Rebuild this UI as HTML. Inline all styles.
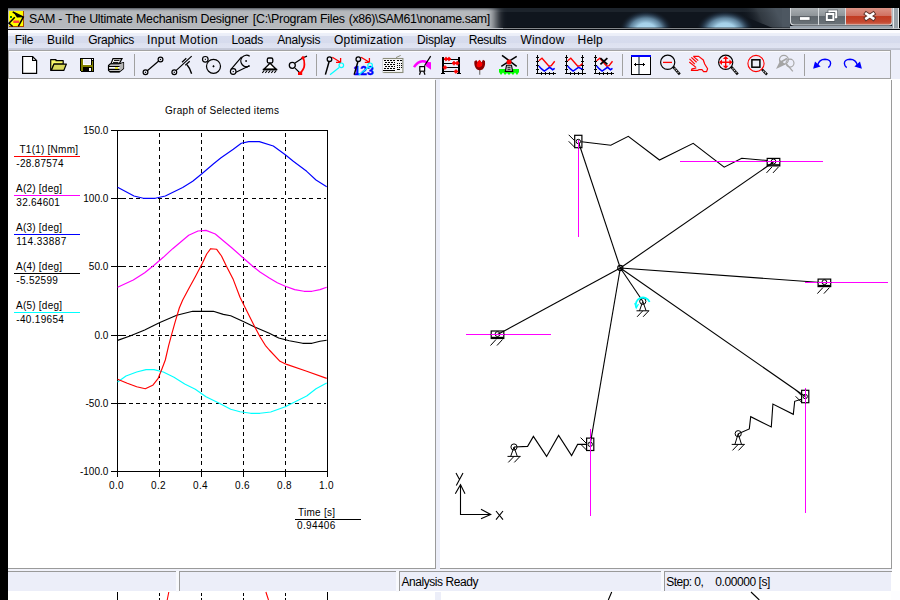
<!DOCTYPE html>
<html><head><meta charset="utf-8">
<style>
html,body{margin:0;padding:0;}
body{width:900px;height:600px;background:#000;position:relative;overflow:hidden;font-family:"Liberation Sans",sans-serif;}
.abs{position:absolute;}
#title{left:8px;top:8px;width:892px;height:22px;background:#0b0d12;}
#ttext{left:29px;top:11px;font-size:13.5px;color:#000;white-space:nowrap;line-height:16px;}
#menu{left:8px;top:30px;width:892px;height:20px;background:linear-gradient(#fdfdff 0px,#fdfdff 2.5px,#edf0f9 3.5px,#ebeef8 5.5px,#d8ddee 6.5px,#d6dbed 12.5px,#dde1f0 13.5px,#dfe3f2 17.7px,#c8ccdb 18.5px,#c4c8d8 20px);}
.mi{position:absolute;top:33px;font-size:12px;letter-spacing:-0.4px;line-height:14px;color:#000;white-space:nowrap;}
#tbar{left:8px;top:50px;width:892px;height:29px;background:#eceef9;}
#tbarbox{left:8px;top:50px;width:882px;height:28px;border:1px solid #a0a0a0;border-top-color:#a9a9a9;box-sizing:content-box;}
#client{left:8px;top:79px;width:892px;height:521px;background:#fff;}
#split{left:435px;top:79px;width:5px;height:493px;background:#eceef9;}
#status{left:8px;top:572px;width:883px;height:19px;background:#eceef9;}
.st{position:absolute;top:575px;font-size:12px;letter-spacing:-0.4px;line-height:14px;color:#000;white-space:nowrap;}
svg{position:absolute;left:0;top:0;}
.gl{font-size:10px;fill:#000;font-family:"Liberation Sans",sans-serif;}
</style></head><body>
<div id="title" class="abs"></div>
<div id="menu" class="abs"></div>
<div id="tbar" class="abs"></div>
<div id="client" class="abs"></div>
<div id="split" class="abs"></div>
<div id="status" class="abs"></div>
<svg id="main" width="900" height="600" viewBox="0 0 900 600">
<defs>
<linearGradient id="tglow" x1="0" x2="1" y1="0" y2="0">
<stop offset="0" stop-color="#aeb1b5"/><stop offset="0.55" stop-color="#b4b7bb"/><stop offset="0.93" stop-color="#a2a5aa"/><stop offset="0.965" stop-color="#5a5e66"/><stop offset="1" stop-color="#10161e" stop-opacity="0"/>
</linearGradient>
<linearGradient id="tv" x1="0" x2="0" y1="0" y2="1">
<stop offset="0" stop-color="#30363c" stop-opacity="0.55"/><stop offset="0.15" stop-color="#40464c" stop-opacity="0.25"/><stop offset="0.35" stop-color="#fff" stop-opacity="0.05"/><stop offset="0.8" stop-color="#fff" stop-opacity="0.0"/><stop offset="1" stop-color="#30363c" stop-opacity="0.2"/>
</linearGradient>
<radialGradient id="blob" cx="0.5" cy="0.5" r="0.5">
<stop offset="0" stop-color="#b4dcf2"/><stop offset="0.35" stop-color="#a4d0e8"/><stop offset="0.6" stop-color="#6c94b0" stop-opacity="0.85"/><stop offset="0.8" stop-color="#2c4258" stop-opacity="0.6"/><stop offset="1" stop-color="#10161e" stop-opacity="0"/>
</radialGradient>
<linearGradient id="btn" x1="0" x2="0" y1="0" y2="1">
<stop offset="0" stop-color="#a9aeb2"/><stop offset="0.48" stop-color="#8e9498"/><stop offset="0.5" stop-color="#5f666c"/><stop offset="1" stop-color="#6a7278"/>
</linearGradient>
<linearGradient id="btnc" x1="0" x2="0" y1="0" y2="1">
<stop offset="0" stop-color="#dc9486"/><stop offset="0.48" stop-color="#d07060"/><stop offset="0.5" stop-color="#c23c22"/><stop offset="0.85" stop-color="#c44830"/><stop offset="1" stop-color="#d0705c"/>
</linearGradient>
<linearGradient id="rstripe" x1="0" x2="1" y1="0" y2="0">
<stop offset="0" stop-color="#10161e" stop-opacity="0"/><stop offset="0.6" stop-color="#4a525a"/><stop offset="1" stop-color="#5a646c"/>
</linearGradient>
<linearGradient id="diag" gradientUnits="userSpaceOnUse" x1="745" y1="22" x2="775" y2="8">
<stop offset="0" stop-color="#10161e" stop-opacity="0"/><stop offset="0.5" stop-color="#3a424a" stop-opacity="0.8"/><stop offset="1" stop-color="#4a545e"/>
</linearGradient>
<filter id="gb" x="-5%" y="-100%" width="110%" height="300%"><feGaussianBlur stdDeviation="5 1.6"/></filter>
<clipPath id="tclip"><rect x="8" y="8" width="892" height="21"/></clipPath>
</defs>
<rect x="8" y="8" width="892" height="21" fill="#10161e"/>
<rect x="8" y="8" width="892" height="4" fill="#202830" opacity="0.8"/>
<g clip-path="url(#tclip)">
<rect x="-20" y="8.6" width="516" height="28" fill="#b6b9bd" filter="url(#gb)"/>
<ellipse cx="646" cy="30" rx="27" ry="20" fill="url(#blob)"/>
<ellipse cx="725" cy="30" rx="29" ry="20" fill="url(#blob)"/>
<path d="M725,8 L790,8 L790,29 L775,29 Z" fill="url(#diag)"/>
<rect x="782" y="8" width="8" height="21" fill="#4e5862" opacity="0.8"/>
<rect x="892" y="8" width="8" height="21" fill="#98a2aa"/>
<rect x="893" y="8" width="1" height="21" fill="#e8ecee"/>
<rect x="898" y="8" width="1" height="21" fill="#e8ecee"/>
<rect x="899" y="8" width="1" height="22" fill="#000"/>
</g>
<rect x="8" y="28" width="892" height="1" fill="#c4c8cc" opacity="0.9"/>
<rect x="503" y="28" width="287" height="1" fill="#85898d"/>
<rect x="8" y="29" width="892" height="1" fill="#0c1016"/>
<rect x="503" y="27" width="287" height="1" fill="#000" opacity="0.3"/>
<path d="M790,8 H892.5 V22 Q892.5,25.5 889,25.5 H794 Q790,25.5 790,22 Z" fill="#d6dadd"/>
<path d="M791,8 H818 V24.5 H794.5 Q791,24.5 791,21.5 Z" fill="url(#btn)"/>
<rect x="819" y="8" width="26" height="16.5" fill="url(#btn)"/>
<path d="M846,8 H891.5 V21.5 Q891.5,24.5 888.5,24.5 H846 Z" fill="url(#btnc)"/>
<rect x="790" y="26" width="102" height="2" fill="#aab4be" opacity="0.9"/>
<rect x="799.5" y="16.7" width="10.5" height="3.6" fill="#fff" stroke="#4a5056" stroke-width="0.8"/>
<rect x="829.3" y="11.3" width="7" height="6" fill="none" stroke="#4a5056" stroke-width="3.2"/><rect x="829.3" y="11.3" width="7" height="6" fill="none" stroke="#fff" stroke-width="2"/>
<rect x="826.8" y="14" width="6.6" height="6" fill="#70787e" stroke="#4a5056" stroke-width="3.2"/><rect x="826.8" y="14" width="6.6" height="6" fill="#5a6268" stroke="#fff" stroke-width="2"/>
<path d="M866.3,13.7 L873.2,18.4 M873.2,13.7 L866.3,18.4" stroke="#5a3028" stroke-width="4.4" stroke-linecap="square"/>
<path d="M866.3,13.7 L873.2,18.4 M873.2,13.7 L866.3,18.4" stroke="#fff" stroke-width="2.6" stroke-linecap="square"/>
<g shape-rendering="crispEdges"><rect x="9" y="11" width="15" height="16" fill="#a84800"/><rect x="9" y="11" width="14" height="15" fill="#ffff00"/><rect x="10" y="16" width="2" height="2" fill="#008000"/></g>
<path d="M12.7,12 L23.3,17 L18.3,26.3 M14.8,17.2 L9,23.3 L12.7,26.5" stroke="#000" stroke-width="1.5" fill="none"/>
<path d="M13.4,12.3 L17,17.5 L22.8,17.2 Z" fill="#000"/>
<rect x="13.3" y="20.5" width="6" height="2.5" fill="#ff4040"/>
<text x="29.0" y="22.8" font-family="Liberation Sans, sans-serif" font-size="12.4" fill="#000" textLength="219.5" lengthAdjust="spacing">SAM - The Ultimate Mechanism Designer</text>
<text x="252.8" y="22.8" font-family="Liberation Sans, sans-serif" font-size="12.4" fill="#000" textLength="92.2" lengthAdjust="spacing">[C:\Program Files</text>
<text x="348.8" y="22.8" font-family="Liberation Sans, sans-serif" font-size="12.4" fill="#000" textLength="141.4" lengthAdjust="spacing">(x86)\SAM61\noname.sam]</text>
<g shape-rendering="crispEdges">
<rect x="8.5" y="50.5" width="882" height="28" fill="none" stroke="#a3a3a3"/>
<rect x="9" y="51" width="881" height="1" fill="#fbfbfe"/>
<rect x="134" y="54" width="1" height="22" fill="#a0a0a0"/>
<rect x="316" y="54" width="1" height="22" fill="#a0a0a0"/>
<rect x="527" y="54" width="1" height="22" fill="#a0a0a0"/>
<rect x="622" y="54" width="1" height="22" fill="#a0a0a0"/>
<rect x="804" y="54" width="1" height="22" fill="#a0a0a0"/>
<rect x="435" y="80" width="1" height="489" fill="#9a9a9a"/>
<rect x="8" y="568" width="428" height="1" fill="#9a9a9a"/>
<rect x="891" y="80" width="1" height="489" fill="#9a9a9a"/>
<rect x="440" y="568" width="452" height="1" fill="#9a9a9a"/>
<rect x="8" y="569" width="884" height="2" fill="#f1f2fa"/>
<rect x="8" y="571" width="884" height="1" fill="#9a9a9a"/>
<rect x="176" y="571" width="3" height="21" fill="#f8f9fd"/>
<rect x="179" y="572" width="1" height="19" fill="#9a9a9a"/>
<rect x="396" y="571" width="3" height="21" fill="#f8f9fd"/>
<rect x="399" y="572" width="1" height="19" fill="#9a9a9a"/>
<rect x="661" y="571" width="3" height="21" fill="#f8f9fd"/>
<rect x="664" y="572" width="1" height="19" fill="#9a9a9a"/>
<rect x="435" y="592" width="6" height="8" fill="#eceef9"/>
<rect x="891" y="591" width="9" height="9" fill="#fdfdff"/>
<path d="M117.5,592 V600 M327.5,592 V600" stroke="#000" stroke-width="1"/>
<path d="M159.5,593 V595.7 M159.5,597.8 V600" stroke="#000" stroke-width="1"/>
<path d="M201.5,593 V595.7 M201.5,597.8 V600" stroke="#000" stroke-width="1"/>
<path d="M243.5,593 V595.7 M243.5,597.8 V600" stroke="#000" stroke-width="1"/>
<path d="M285.5,593 V595.7 M285.5,597.8 V600" stroke="#000" stroke-width="1"/>
</g>
<path d="M168.8,592 L167.2,600 M265.9,592 L268.5,600" stroke="#ff0000" stroke-width="1.1"/>
<path d="M611.7,592 L608.3,600 M751,592 L759.3,600" stroke="#000" stroke-width="1.1"/>
<g shape-rendering="crispEdges" stroke="#000" stroke-width="1" fill="none">
<path d="M117.5,130.5 H327.5 V471.5 H117.5 Z"/>
<path d="M111,130.5 H117.5"/>
<path d="M111,198.5 H117.5"/>
<path d="M111,266.5 H117.5"/>
<path d="M111,335.5 H117.5"/>
<path d="M111,403.5 H117.5"/>
<path d="M111,471.5 H117.5"/>
<path d="M117.5,471.5 V477"/>
<path d="M159.5,471.5 V477"/>
<path d="M201.5,471.5 V477"/>
<path d="M243.5,471.5 V477"/>
<path d="M285.5,471.5 V477"/>
<path d="M327.5,471.5 V477"/>
<path d="M159.5,132.8 V471.5" stroke-dasharray="4 3.3"/>
<path d="M201.5,132.8 V471.5" stroke-dasharray="4 3.3"/>
<path d="M243.5,132.8 V471.5" stroke-dasharray="4 3.3"/>
<path d="M285.5,132.8 V471.5" stroke-dasharray="4 3.3"/>
<path d="M117.5,198.5 H125.5"/>
<path d="M128.9,198.5 H325.5" stroke-dasharray="3.9 3.32"/>
<path d="M117.5,266.5 H125.5"/>
<path d="M128.9,266.5 H325.5" stroke-dasharray="3.9 3.32"/>
<path d="M117.5,335.5 H125.5"/>
<path d="M128.9,335.5 H325.5" stroke-dasharray="3.9 3.32"/>
<path d="M117.5,403.5 H125.5"/>
<path d="M128.9,403.5 H325.5" stroke-dasharray="3.9 3.32"/>
</g>
<path d="M117.6,187.3 L134.0,196.0 L143.3,198.3 L155.3,198.3 L165.3,196.0 L182.7,187.6 L192.7,181.3 L201.6,174.0 L213.3,164.0 L220.7,158.0 L233.3,149.3 L241.3,143.3 L248.7,141.6 L259.3,141.6 L273.3,146.0 L285.3,154.7 L293.3,161.3 L306.7,171.3 L316.0,180.0 L326.7,186.7" stroke="#0000ff" stroke-width="1.15" fill="none" stroke-linejoin="round"/>
<path d="M117.6,287.3 L133.3,280.0 L144.7,272.7 L154.0,265.3 L163.3,257.3 L172.7,248.7 L180.7,242.0 L188.7,235.3 L198.0,231.0 L206.0,230.4 L215.3,234.0 L223.3,240.7 L232.0,248.0 L243.3,258.0 L253.3,266.7 L260.0,272.0 L269.3,278.0 L277.3,282.7 L285.3,286.2 L294.7,289.6 L304.0,291.3 L312.0,291.3 L320.0,289.6 L326.7,287.3" stroke="#ff00ff" stroke-width="1.15" fill="none" stroke-linejoin="round"/>
<path d="M117.6,340.4 L130.0,336.0 L144.7,330.0 L159.3,322.7 L176.7,315.3 L192.7,311.3 L213.3,311.3 L223.3,314.4 L230.7,315.7 L243.3,321.6 L254.7,327.0 L269.3,333.3 L278.7,338.0 L289.3,340.7 L302.7,343.3 L312.0,343.3 L320.0,341.3 L326.7,340.3" stroke="#000" stroke-width="1.15" fill="none" stroke-linejoin="round"/>
<path d="M117.6,382.0 L126.0,376.0 L136.7,372.0 L146.0,369.6 L154.0,369.6 L163.3,372.0 L174.0,377.3 L184.7,384.0 L195.3,389.3 L206.0,396.7 L219.3,403.3 L230.7,409.3 L240.0,411.7 L250.7,413.3 L260.0,413.3 L270.7,412.0 L285.3,406.7 L294.7,402.0 L306.7,396.0 L316.0,388.7 L326.7,383.0" stroke="#00ffff" stroke-width="1.15" fill="none" stroke-linejoin="round"/>
<path d="M117.6,379.3 L127.3,383.3 L136.7,386.7 L145.3,388.7 L152.7,385.3 L158.0,378.7 L162.0,368.7 L165.3,360.0 L168.7,345.3 L171.6,334.7 L175.3,321.3 L179.3,308.0 L182.7,300.0 L188.7,288.7 L195.3,276.7 L202.0,264.0 L206.7,254.0 L210.7,248.7 L216.7,249.3 L221.5,256.0 L226.7,266.7 L233.3,279.6 L240.0,297.3 L246.7,310.7 L254.7,326.7 L260.0,336.7 L265.3,345.3 L269.3,350.0 L280.0,361.3 L286.7,364.4 L306.7,371.3 L326.7,378.4" stroke="#ff0000" stroke-width="1.15" fill="none" stroke-linejoin="round"/>
<text class="gl" x="108.3" y="133.7" text-anchor="end">150.0</text>
<text class="gl" x="108.3" y="201.7" text-anchor="end">100.0</text>
<text class="gl" x="108.3" y="269.7" text-anchor="end">50.0</text>
<text class="gl" x="108.3" y="338.7" text-anchor="end">0.0</text>
<text class="gl" x="108.3" y="406.7" text-anchor="end">-50.0</text>
<text class="gl" x="108.3" y="474.7" text-anchor="end">-100.0</text>
<text class="gl" x="116.5" y="489" text-anchor="middle" letter-spacing="0.3">0.0</text>
<text class="gl" x="158.5" y="489" text-anchor="middle" letter-spacing="0.3">0.2</text>
<text class="gl" x="200.5" y="489" text-anchor="middle" letter-spacing="0.3">0.4</text>
<text class="gl" x="242.5" y="489" text-anchor="middle" letter-spacing="0.3">0.6</text>
<text class="gl" x="284.5" y="489" text-anchor="middle" letter-spacing="0.3">0.8</text>
<text class="gl" x="326.5" y="489" text-anchor="middle" letter-spacing="0.3">1.0</text>
<text class="gl" x="165" y="113.8" textLength="114" lengthAdjust="spacing">Graph of Selected items</text>
<text class="gl" x="19.5" y="153.2" textLength="58.5" lengthAdjust="spacing">T1(1) [Nmm]</text>
<path d="M14,156.5 H80" stroke="#ff0000" stroke-width="1" shape-rendering="crispEdges"/>
<text class="gl" x="16.3" y="167.1" textLength="47.2" lengthAdjust="spacing">-28.87574</text>
<text class="gl" x="16" y="192.2" textLength="46" lengthAdjust="spacing">A(2) [deg]</text>
<path d="M14,195.5 H80" stroke="#ff00ff" stroke-width="1" shape-rendering="crispEdges"/>
<text class="gl" x="16.3" y="206.1" textLength="43.6" lengthAdjust="spacing">32.64601</text>
<text class="gl" x="16" y="231.2" textLength="46" lengthAdjust="spacing">A(3) [deg]</text>
<path d="M14,234.5 H80" stroke="#0000ff" stroke-width="1" shape-rendering="crispEdges"/>
<text class="gl" x="16.3" y="245.1" textLength="50" lengthAdjust="spacing">114.33887</text>
<text class="gl" x="16" y="270.2" textLength="46" lengthAdjust="spacing">A(4) [deg]</text>
<path d="M14,273.5 H80" stroke="#000" stroke-width="1" shape-rendering="crispEdges"/>
<text class="gl" x="16.3" y="284.1" textLength="41.6" lengthAdjust="spacing">-5.52599</text>
<text class="gl" x="16" y="309.2" textLength="46" lengthAdjust="spacing">A(5) [deg]</text>
<path d="M14,312.5 H80" stroke="#00ffff" stroke-width="1" shape-rendering="crispEdges"/>
<text class="gl" x="16.3" y="323.1" textLength="47.6" lengthAdjust="spacing">-40.19654</text>
<text class="gl" x="298" y="515.9" textLength="37" lengthAdjust="spacing">Time [s]</text>
<path d="M295,519.5 H361" stroke="#000" stroke-width="1" shape-rendering="crispEdges"/>
<text class="gl" x="297" y="528.8" textLength="38.3" lengthAdjust="spacing">0.94406</text>
<g stroke="#000" stroke-width="1.1" fill="none" stroke-linecap="butt">
<path d="M620.3,268 L578.3,141.5"/>
<path d="M620.3,268 L773.5,162"/>
<path d="M620.3,268 L824.4,282.7"/>
<path d="M620.3,268 L805.2,396.5"/>
<path d="M620.3,268 L590.2,444.3"/>
<path d="M620.3,268 L497.5,334.6"/>
<path d="M620.3,268 L642.8,301.3"/>
<circle cx="620.3" cy="268" r="2.6" />
<path d="M581.5,141.7 L610.8,145.3 L628.3,136.3 L659.5,160.0 L693.2,143.3 L724.2,167.2 L741.7,158.3 L767.5,160.5"/>
<path d="M801.3,399.3 L794.7,401.3 L793.3,414.3 L772.9,404.0 L771.3,426.9 L750.7,416.7 L749.3,428.9 L738.3,433.7"/>
<path d="M586.4,444.4 L577.6,444.4 L571.6,455.6 L558.6,435.4 L546.6,456.4 L533.4,436.4 L527.6,446.4 L514.0,447.0"/>
</g>
<g stroke="#ff00ff" stroke-width="1" shape-rendering="crispEdges">
<path d="M578.5,140 V237"/>
<path d="M680,161.5 H823"/>
<path d="M805,282.5 H888"/>
<path d="M805.5,388 V513"/>
<path d="M590.5,429 V516"/>
<path d="M466,334.5 H551"/>
</g>
<g stroke="#000" stroke-width="1.2" fill="none">
<rect x="574.7" y="135.3" width="7.2" height="12.4"/><circle cx="578.3" cy="141.5" r="2.2" stroke-width="1"/><path d="M568.7,134.8 L574.7,140.8 M568.7,141.3 L574.7,147.3" stroke-width="1"/>
<rect x="801.6" y="390.3" width="7.2" height="12.4"/><circle cx="805.2" cy="396.5" r="2.2" stroke-width="1"/><path d="M795.6,389.8 L801.6,395.8 M795.6,396.3 L801.6,402.3" stroke-width="1"/>
<rect x="586.6" y="438.1" width="7.2" height="12.4"/><circle cx="590.2" cy="444.3" r="2.2" stroke-width="1"/><path d="M580.6,437.6 L586.6,443.6 M580.6,444.1 L586.6,450.1" stroke-width="1"/>
<rect x="767.2" y="158.4" width="12.6" height="7.5"/><path d="M767.2,164.9 H779.8" stroke-width="1.4"/><circle cx="773.5" cy="161.5" r="2.4" stroke-width="1"/><path d="M772.0,166.9 L766.5,172.9 M778.5,166.9 L773.0,172.9" stroke-width="1"/>
<rect x="818.1" y="279.1" width="12.6" height="7.5"/><path d="M818.1,285.6 H830.7" stroke-width="1.4"/><circle cx="824.4" cy="282.2" r="2.4" stroke-width="1"/><path d="M822.9,287.6 L817.4,293.6 M829.4,287.6 L823.9,293.6" stroke-width="1"/>
<rect x="491.2" y="331.0" width="12.6" height="7.5"/><path d="M491.2,337.5 H503.8" stroke-width="1.4"/><circle cx="497.5" cy="334.1" r="2.4" stroke-width="1"/><path d="M496.0,339.5 L490.5,345.5 M502.5,339.5 L497.0,345.5" stroke-width="1"/>
</g>
<g stroke="#ff00ff" stroke-width="1" shape-rendering="crispEdges">
<path d="M578.5,141 V148"/><path d="M805.5,390 V403"/><path d="M590.5,438 V451"/>
<path d="M767,161.5 H780"/><path d="M818,282.5 H831"/><path d="M491,334.5 H504"/>
</g>
<g stroke="#000" stroke-width="1" fill="none"><circle cx="738.2" cy="433.7" r="3.1"/><path d="M738.2,433.7 L734.9,444.4 M738.2,433.7 L741.5,444.4"/><path d="M731.7,444.4 H744.7"/><path d="M738.2,444.4 L732.5,450.4 M744.2,444.4 L738.5,450.4"/></g>
<g stroke="#000" stroke-width="1" fill="none"><circle cx="514" cy="447" r="3.1"/><path d="M514,447 L510.7,456.4 M514,447 L517.3,456.4"/><path d="M507.5,456.4 H520.5"/><path d="M514.0,456.4 L508.3,462.4 M520.0,456.4 L514.3,462.4"/></g>
<g stroke="#000" stroke-width="1" fill="none"><circle cx="642.8" cy="301.3" r="3.1"/><path d="M642.8,301.3 L639.5,310.8 M642.8,301.3 L646.1,310.8"/><path d="M636.5,310.8 H649.1"/><path d="M642.8,310.8 L637.1,316.8 M648.8,310.8 L643.1,316.8"/></g>
<path d="M636.3,307.5 A7,7 0 1 1 649.6,302" stroke="#00ffff" stroke-width="1.8" fill="none"/>
<path d="M634.8,303 L636.3,308 L638.5,304" stroke="#00ffff" stroke-width="1.2" fill="none"/>
<g stroke="#000" stroke-width="1.1" fill="none">
<path d="M460.5,484.7 V514.5 H490.7"/>
<path d="M455.3,493.7 L460.5,484.7 L465,493.7"/>
<path d="M481,509.3 L490.7,514.4 L481,518.7"/>
<path d="M456,473 L459.5,479.5 M463,473 L456.3,485.5"/>
<path d="M496,511 L503,519.7 M503,511 L496,519.7"/>
</g>
<path d="M22.6,56.5 H32.6 L36.6,60.5 V73.4 H22.6 Z" fill="#fff" stroke="#000" stroke-width="1.2"/>
<path d="M32.6,56.5 V60.5 H36.6" fill="none" stroke="#000" stroke-width="1.2"/>
<path d="M50.7,59.6 H56 V60.7 H63.2 V64 H54 L51.5,70.3 H50.7 Z" fill="#fafa6a" stroke="#000" stroke-width="1.2" stroke-linejoin="round"/>
<path d="M54,64.1 H66.4 L63.8,70.4 H51.3 Z" fill="#d9d95c" stroke="#000" stroke-width="1.2" stroke-linejoin="round"/>
<g shape-rendering="crispEdges">
<rect x="80" y="58" width="14" height="14" fill="#000"/>
<rect x="81" y="59" width="2" height="12" fill="#808000"/>
<rect x="92" y="61" width="1" height="10" fill="#808000"/>
<rect x="81" y="65" width="12" height="2" fill="#808000"/>
<rect x="83" y="59" width="8" height="6" fill="#fff"/>
<rect x="84" y="60" width="6" height="4" fill="#eceef9"/>
<rect x="89" y="68" width="2" height="3" fill="#fff"/>
<rect x="92" y="59" width="1" height="1" fill="#fff"/>
<rect x="80" y="71" width="1" height="1" fill="#eceef9"/>
</g>
<path d="M113,58.6 H122 L119.2,63.8 H111 Z" fill="#fff" stroke="#000" stroke-width="1.2"/>
<path d="M114,60.4 H119.5 M113,62.4 H118.5" stroke="#000" stroke-width="1"/>
<path d="M108.5,65.5 L110.5,63.8 H119.5 L123.5,62.5 V68.5 L119.5,71.8 H110 L108.5,70.3 Z" fill="#fff" stroke="#000" stroke-width="1.2" stroke-linejoin="round"/>
<path d="M119.5,64.5 L123.4,63 V68.3 L119.8,71.3 Z" fill="#b4b4b4"/>
<path d="M108.5,66.4 H119.6 M108.5,69.5 H119.6 M110,71.6 H119.5" stroke="#000" stroke-width="1.3"/>
<rect x="115" y="67.3" width="3" height="1.5" fill="#e8e800"/>
<path d="M147.3,70.7 L158.7,61" stroke="#000" stroke-width="1.2"/>
<circle cx="145.5" cy="72.3" r="2.4" fill="none" stroke="#000" stroke-width="1.2"/><rect x="144.9" y="71.7" width="1.2" height="1.2" fill="#000"/>
<circle cx="160.5" cy="59.5" r="2.4" fill="none" stroke="#000" stroke-width="1.2"/><rect x="159.9" y="58.9" width="1.2" height="1.2" fill="#000"/>
<path d="M176,70.6 L191.7,56.1 M182,62.3 L186.3,58.3 M185.3,65.3 L189.7,61.3" stroke="#000" stroke-width="1.2" fill="none"/>
<path d="M187,64.7 Q190,68 191.6,73.7" stroke="#000" stroke-width="1.4" fill="none"/>
<circle cx="174.3" cy="72.3" r="2.4" fill="none" stroke="#000" stroke-width="1.2"/><rect x="173.70000000000002" y="71.7" width="1.2" height="1.2" fill="#000"/>
<circle cx="213.5" cy="66.3" r="7" fill="none" stroke="#000" stroke-width="1.2"/>
<path d="M212.5,66.3 H214.5 M213.5,65.3 V67.3" stroke="#000" stroke-width="1"/>
<circle cx="205.3" cy="59.3" r="2.8" fill="#eceef9" stroke="#000" stroke-width="1.2"/><rect x="204.8" y="58.8" width="1.1" height="1.1" fill="#000"/>
<path d="M249.7,56.2 A5.7,5.7 0 1 0 249.7,65.7" fill="none" stroke="#000" stroke-width="1.3"/>
<rect x="245.3" y="60.2" width="1.6" height="1.6" fill="#000"/>
<path d="M231.2,69.2 L241.6,56.8 M236,72.3 L249.3,65.8" stroke="#000" stroke-width="1.2"/>
<path d="M245,67.3 L249.6,65.2 L247,68 Z" fill="#000"/>
<circle cx="233.2" cy="71.5" r="2.8" fill="#eceef9" stroke="#000" stroke-width="1.2"/><rect x="232.7" y="71" width="1.1" height="1.1" fill="#000"/>
<path d="M270,63.2 L263.9,69.2 H276.2 Z" fill="#fff" stroke="#000" stroke-width="1.2"/>
<path d="M262.8,69.6 H277.2" stroke="#000" stroke-width="1.6"/>
<path d="M264.3,70.5 L262.3,72.8 M267.3,70.5 L265.3,72.8 M270.3,70.5 L268.3,72.8 M273.3,70.5 L271.3,72.8 M276.3,70.5 L274.3,72.8" stroke="#000" stroke-width="1.1"/>
<rect x="267.3" y="58" width="5.5" height="5" rx="1.5" fill="#eceef9" stroke="#000" stroke-width="1.3"/>
<path d="M295,62.9 L303,57.7 L307,56.1 M295,68.1 L300,73" stroke="#000" stroke-width="1.2" fill="none"/>
<circle cx="292.3" cy="65.3" r="3" fill="#eceef9" stroke="#000" stroke-width="1.3"/>
<path d="M303,58 Q304.6,60 304.4,64.5 Q304.4,69 300.3,73" stroke="#ff0000" stroke-width="1.8" fill="none"/>
<path d="M303,55.8 L305,57.8 L303,59.8 L301,57.8 Z" fill="#ff0000"/>
<rect x="298" y="72" width="4.2" height="3" fill="#ff0000"/>
<path d="M329,62 L325.4,74.6" stroke="#000" stroke-width="1.5"/><circle cx="329.5" cy="59.2" r="2.3" fill="none" stroke="#000" stroke-width="1.3"/><path d="M332.3,57.3 L340.5,62.2 M340.6,58 V62.6 M336,62.3 H341" stroke="#ff0000" stroke-width="1.3" fill="none"/><circle cx="341.3" cy="65.3" r="2.3" fill="none" stroke="#00ffff" stroke-width="1.2"/><path d="M339.2,67.5 L330,74.7" stroke="#00ffff" stroke-width="1.2"/>
<text x="353.6" y="74.6" font-family="Liberation Sans, sans-serif" font-weight="bold" font-size="13.4" fill="#0000ff" stroke="#0000ff" stroke-width="0.5" textLength="20" lengthAdjust="spacingAndGlyphs">123</text>
<path d="M357.8,62 L354.2,74.6" stroke="#000" stroke-width="1.5"/><circle cx="358.3" cy="59.2" r="2.3" fill="none" stroke="#000" stroke-width="1.3"/><path d="M361.1,57.3 L369.3,62.2 M369.40000000000003,58 V62.6 M364.8,62.3 H369.8" stroke="#ff0000" stroke-width="1.3" fill="none"/><circle cx="370.1" cy="65.3" r="2.3" fill="none" stroke="#00ffff" stroke-width="1.2"/><path d="M368.0,67.5 L358.8,74.7" stroke="#00ffff" stroke-width="1.2"/>
<rect x="383.3" y="58.5" width="19.6" height="14" fill="#f6f6f6" stroke="#8a8c7a" stroke-width="1.1"/>
<rect x="383" y="59.2" width="1.2" height="13" fill="#f6f6f6"/>
<path d="M396,57.6 L400.7,55.4" stroke="#8a8c7a" stroke-width="1"/>
<g stroke="#000" stroke-width="1.1" shape-rendering="crispEdges">
<path d="M384,60.5 H395" stroke-dasharray="2 1"/>
<path d="M385,62.5 H395" stroke-dasharray="2 1"/>
<path d="M384,64.5 H395" stroke-dasharray="2 1"/>
<path d="M385,66.5 H395" stroke-dasharray="2 1"/>
<path d="M384,68.5 H395" stroke-dasharray="2 1"/>
<path d="M383,70.5 H395"/>
<path d="M397,60.5 H402" stroke-dasharray="2 1"/>
<path d="M397,63.5 H402 M397,65.5 H402 M397,67.5 H402" stroke-dasharray="1 1"/>
<path d="M397,69.5 H400"/>
</g>
<path d="M414,67.2 Q417.5,61.5 422.5,61.2 Q427,61 429,65" stroke="#ff00ff" stroke-width="2.4" fill="none"/>
<path d="M427,61.8 L431,62.3 V69.8 L425.3,65.8 Z" fill="#ff00ff"/>
<path d="M430.7,56.1 L424.5,65.8" stroke="#000" stroke-width="1.2"/>
<rect x="419.8" y="66.6" width="4.8" height="4.6" fill="#fff" stroke="#000" stroke-width="1.2"/>
<path d="M420.6,71.5 L419.5,74.8 M423.8,71.5 L425,74.8" stroke="#000" stroke-width="1.2"/>
<g shape-rendering="crispEdges" fill="#000">
<rect x="442" y="57" width="2" height="17"/><rect x="458" y="57" width="2" height="17"/>
<rect x="441" y="73" width="4" height="1"/><rect x="457" y="73" width="4" height="1"/>
<rect x="444" y="58.5" width="14" height="1"/>
<rect x="444" y="62.7" width="14" height="1"/>
<rect x="444" y="67" width="14" height="1"/>
<rect x="444" y="71" width="14" height="1"/>
</g>
<path d="M446,56.9 L448.1,59 L446,61.1 L443.9,59 Z" fill="#ff0000" stroke="#ff0000" stroke-width="0.6" stroke-linejoin="round"/>
<path d="M449,56.9 L451.1,59 L449,61.1 L446.9,59 Z" fill="#ff0000" stroke="#ff0000" stroke-width="0.6" stroke-linejoin="round"/>
<path d="M454,61.1 L456.1,63.2 L454,65.3 L451.9,63.2 Z" fill="#ff0000" stroke="#ff0000" stroke-width="0.6" stroke-linejoin="round"/>
<path d="M457.3,61.1 L459.40000000000003,63.2 L457.3,65.3 L455.2,63.2 Z" fill="#ff0000" stroke="#ff0000" stroke-width="0.6" stroke-linejoin="round"/>
<path d="M445,65.4 L447.1,67.5 L445,69.6 L442.9,67.5 Z" fill="#ff0000" stroke="#ff0000" stroke-width="0.6" stroke-linejoin="round"/>
<path d="M456,69.4 L458.1,71.5 L456,73.6 L453.9,71.5 Z" fill="#ff0000" stroke="#ff0000" stroke-width="0.6" stroke-linejoin="round"/>
<path d="M479.7,70 V74.8" stroke="#808080" stroke-width="1.3"/>
<path d="M474.3,61.5 Q474,67 477,69.5 Q479.7,71 482.5,69.5 Q485.6,67 485,61 L483,59.8 L481.5,62.5 L479.7,59.8 L478,62.5 L476.3,60 Z" fill="#8a0000"/>
<path d="M476.5,64.5 L478,61 L479.7,60 L481,62 L482.5,63.5 L482,66 L479,67.5 L476.8,66.5 Z" fill="#ff0000"/>
<path d="M499,69 H519 V72 L517,75 L515,72.5 L513,75 L511,73 L509,75 L507,73 L505,75 L503,72.5 L501,75 L499,72 Z" fill="#00ff00"/>
<path d="M502,55.3 L516.7,66.3 M516.7,56.3 L501.3,66.3" stroke="#000" stroke-width="1.5"/>
<path d="M506.5,65.3 H511.5 L512.7,71.4 H505.3 Z" fill="#c8c8c8" stroke="#000" stroke-width="1.1"/>
<path d="M507.5,67.3 H510.5 M507.5,69.3 H510.5" stroke="#000" stroke-width="0.9"/>
<circle cx="509" cy="62" r="2.5" fill="#ff0000"/>
<g shape-rendering="crispEdges" fill="#000"><rect x="537" y="55" width="1.4" height="19.4"/><rect x="536" y="56.5" width="3.3" height="1"/><rect x="536" y="60.5" width="3.3" height="1"/><rect x="536" y="65" width="3.3" height="1"/><rect x="536" y="69" width="3.3" height="1"/><rect x="536" y="73" width="20" height="1.4"/><rect x="541" y="72" width="1" height="3.2"/><rect x="545" y="72" width="1" height="3.2"/><rect x="549" y="72" width="1" height="3.2"/><rect x="553" y="72" width="1" height="3.2"/></g><path d="M538.8,60.7 L542.0,58.3 L545.3,62.0 L549.0,66.3 L551.3,65.7 L554.7,61.3" stroke="#ff0000" stroke-width="1.4" fill="none"/><path d="M538.8,66.0 L541.3,68.7 L544.3,71.0 L549.7,67.3 L552.7,69.7 L554.7,68.3" stroke="#0000ff" stroke-width="1.5" fill="none"/>
<g shape-rendering="crispEdges" fill="#000"><rect x="566" y="55" width="1.4" height="19.4"/><rect x="565" y="56.5" width="3.3" height="1"/><rect x="565" y="60.5" width="3.3" height="1"/><rect x="565" y="65" width="3.3" height="1"/><rect x="565" y="69" width="3.3" height="1"/><rect x="565" y="73" width="21" height="1.4"/><rect x="570" y="72" width="1" height="3.2"/><rect x="574" y="72" width="1" height="3.2"/><rect x="578" y="72" width="1" height="3.2"/><rect x="582" y="72" width="1" height="3.2"/><rect x="582" y="55" width="1.4" height="19.4"/><rect x="581" y="56.5" width="3.3" height="1"/><rect x="581" y="60.5" width="3.3" height="1"/><rect x="581" y="65" width="3.3" height="1"/><rect x="581" y="69" width="3.3" height="1"/></g><path d="M567.6,60.7 L570.8,58.3 L574.1,62.0 L577.8,66.3 L580.1,65.7 L582.5,63.5" stroke="#ff0000" stroke-width="1.4" fill="none"/><path d="M567.6,66.0 L570.1,68.7 L573.1,71.0 L578.5,67.3 L580.8,68.5 L582.5,69.0" stroke="#0000ff" stroke-width="1.5" fill="none"/>
<g shape-rendering="crispEdges" fill="#000"><rect x="595" y="55" width="1.4" height="19.4"/><rect x="594" y="56.5" width="3.3" height="1"/><rect x="594" y="60.5" width="3.3" height="1"/><rect x="594" y="65" width="3.3" height="1"/><rect x="594" y="69" width="3.3" height="1"/><rect x="594" y="73" width="20" height="1.4"/><rect x="599" y="72" width="1" height="3.2"/><rect x="603" y="72" width="1" height="3.2"/><rect x="607" y="72" width="1" height="3.2"/><rect x="611" y="72" width="1" height="3.2"/></g><path d="M596.6,60.7 L599.8,58.3 L603.1,62.0 L606.8,66.3 L609.1,65.7 L612.5,61.3" stroke="#ff0000" stroke-width="1.4" fill="none"/><path d="M596.6,66.0 L599.1,68.7 L602.1,71.0 L607.5,67.3 L610.5,69.7 L612.5,68.3" stroke="#0000ff" stroke-width="1.5" fill="none"/><path d="M600.4,58.2 L607.4,64.4 M607.4,58.2 L600.4,64.4" stroke="#000" stroke-width="1.7"/>
<g shape-rendering="crispEdges">
<rect x="631" y="55" width="20" height="20" fill="#000"/>
<rect x="632" y="57" width="18" height="17" fill="#fff"/>
<rect x="631" y="55" width="20" height="2" fill="#0000ff"/>
<rect x="638" y="57" width="2" height="17" fill="#808890"/>
<rect x="635" y="64" width="9" height="1" fill="#000"/>
<rect x="635" y="63" width="1" height="3" fill="#000"/><rect x="643" y="63" width="1" height="3" fill="#000"/>
<rect x="634" y="64" width="1" height="1" fill="#000"/><rect x="644" y="64" width="1" height="1" fill="#000"/>
</g>
<path d="M673,66.6 L679.8,74.4" stroke="#111" stroke-width="2.5" stroke-linecap="butt"/><path d="M674.6,68.39999999999999 L679.1999999999999,73.5" stroke="#e8e8e8" stroke-width="1.1" stroke-dasharray="1.2 1.1"/>
<circle cx="667.7" cy="62.3" r="7.1" fill="none" stroke="#000" stroke-width="1.2"/>
<path d="M663,62.4 H672" stroke="#ff0000" stroke-width="1.3"/>
<path d="M693.3,56.4 H698.7 L703.3,60 L704.7,64 L707.6,68.7 L706.6,71.6 H703.6 L702,69.7 H698.7 L697.6,70.4 H691.4 L692,68.8 L696.3,68" stroke="#ff0000" stroke-width="1.2" fill="none" stroke-linejoin="round"/>
<path d="M689.3,62 L696,67.4 M689.5,58.8 L694.8,64.2 M691.4,57.4 L696.6,62.2 M693.6,56.6 L698.2,60.6" stroke="#ff0000" stroke-width="1.2" fill="none"/>
<path d="M731,66.6 L737.8,74.4" stroke="#111" stroke-width="2.5" stroke-linecap="butt"/><path d="M732.6,68.39999999999999 L737.1999999999999,73.5" stroke="#e8e8e8" stroke-width="1.1" stroke-dasharray="1.2 1.1"/>
<circle cx="725.7" cy="62.3" r="7.1" fill="none" stroke="#000" stroke-width="1.2"/>
<path d="M720,62.3 H731.4 M725.7,57 V67.8" stroke="#ff0000" stroke-width="1.4"/>
<path d="M719,62.3 L722,59.5 V65.1 Z M732.4,62.3 L729.4,59.5 V65.1 Z M725.7,56 L722.9,59 H728.5 Z M725.7,68.8 L722.9,65.8 H728.5 Z" fill="#ff0000"/>
<path d="M761.7,69 L767,74.7" stroke="#111" stroke-width="2.5" stroke-linecap="butt"/><path d="M763.3000000000001,70.8 L766.4,73.8" stroke="#e8e8e8" stroke-width="1.1" stroke-dasharray="1.2 1.1"/>
<circle cx="756" cy="63.5" r="8.1" fill="none" stroke="#ff0000" stroke-width="1.1"/>
<rect x="751.9" y="59.8" width="8" height="7.4" fill="none" stroke="#000" stroke-width="1.5"/>
<circle cx="790" cy="63.1" r="4" fill="none" stroke="#a4a4a4" stroke-width="1.1"/>
<circle cx="783.9" cy="59.8" r="4.4" fill="none" stroke="#a4a4a4" stroke-width="1.2"/>
<path d="M786.7,64.2 L792.8,71.4" stroke="#a4a4a4" stroke-width="1.3"/>
<path d="M776,68.9 L780.5,60 L785.5,64.5 Z" fill="#a4a4a4"/>
<path d="M781,62 L787,58.5" stroke="#a4a4a4" stroke-width="1.5"/>
<path d="M817.5,65.5 Q819,59.3 825,59.3 Q830.8,59.5 830.6,63.5 Q830.5,66 828.3,67.6" stroke="#0000ff" stroke-width="1.4" fill="none"/>
<path d="M813.1,68.8 L815,61.4 L820.6,66.4 Z" fill="#0000ff"/>
<path d="M857.5,65.5 Q856,59.3 850,59.3 Q844.2,59.5 844.4,63.5 Q844.5,66 846.7,67.6" stroke="#0000ff" stroke-width="1.4" fill="none"/>
<path d="M861.9,68.8 L860,61.4 L854.4,66.4 Z" fill="#0000ff"/>
<text x="14.8" y="43.9" font-family="Liberation Sans, sans-serif" font-size="12" fill="#000" textLength="18.7" lengthAdjust="spacing">File</text>
<text x="46.9" y="43.9" font-family="Liberation Sans, sans-serif" font-size="12" fill="#000" textLength="27.4" lengthAdjust="spacing">Build</text>
<text x="88.3" y="43.9" font-family="Liberation Sans, sans-serif" font-size="12" fill="#000" textLength="46.0" lengthAdjust="spacing">Graphics</text>
<text x="146.9" y="43.9" font-family="Liberation Sans, sans-serif" font-size="12" fill="#000" textLength="70.9" lengthAdjust="spacing">Input Motion</text>
<text x="231.4" y="43.9" font-family="Liberation Sans, sans-serif" font-size="12" fill="#000" textLength="31.8" lengthAdjust="spacing">Loads</text>
<text x="277.3" y="43.9" font-family="Liberation Sans, sans-serif" font-size="12" fill="#000" textLength="43.2" lengthAdjust="spacing">Analysis</text>
<text x="333.9" y="43.9" font-family="Liberation Sans, sans-serif" font-size="12" fill="#000" textLength="69.3" lengthAdjust="spacing">Optimization</text>
<text x="417.0" y="43.9" font-family="Liberation Sans, sans-serif" font-size="12" fill="#000" textLength="38.4" lengthAdjust="spacing">Display</text>
<text x="468.8" y="43.9" font-family="Liberation Sans, sans-serif" font-size="12" fill="#000" textLength="37.7" lengthAdjust="spacing">Results</text>
<text x="520.4" y="43.9" font-family="Liberation Sans, sans-serif" font-size="12" fill="#000" textLength="43.9" lengthAdjust="spacing">Window</text>
<text x="577.6" y="43.9" font-family="Liberation Sans, sans-serif" font-size="12" fill="#000" textLength="25.1" lengthAdjust="spacing">Help</text>
<text x="401.4" y="585.9" font-family="Liberation Sans, sans-serif" font-size="12" fill="#000" textLength="77" lengthAdjust="spacing">Analysis Ready</text>
<text x="666.3" y="585.9" font-family="Liberation Sans, sans-serif" font-size="12" fill="#000" textLength="37.5" lengthAdjust="spacing">Step: 0,</text>
<text x="715.3" y="585.9" font-family="Liberation Sans, sans-serif" font-size="12" fill="#000" textLength="55" lengthAdjust="spacing">0.00000 [s]</text>
</svg>
</body></html>
